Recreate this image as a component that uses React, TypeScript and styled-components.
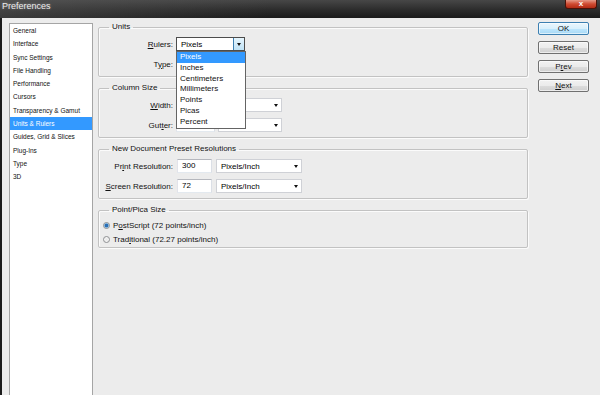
import React from "react"
import styled, { createGlobalStyle } from "styled-components"

const GlobalStyle = createGlobalStyle`
  html, body {
    margin: 0;
    padding: 0;
    background: #ececec;
  }
  body {
    font-family: "Liberation Sans", Arial, sans-serif;
  }
`

const Window = styled.div`
  width: 600px;
  height: 395px;
  overflow: hidden;
  display: flex;
  flex-direction: column;
  background: #ececec;
  font-family: "Liberation Sans", Arial, sans-serif;
  font-size: 8px;
  color: #000;
`

const TitleBar = styled.div`
  height: 18px;
  flex: none;
  display: flex;
  align-items: flex-start;
  justify-content: space-between;
  padding: 0 3px 0 2px;
  background: linear-gradient(to right, rgba(90, 90, 90, 0.5), rgba(0, 0, 0, 0) 45%),
    linear-gradient(to bottom, #474747 0%, #2c2c2c 55%, #1b1b1b 100%);
`

const Title = styled.div`
  color: #ececec;
  font-size: 9px;
  line-height: 12px;
  text-shadow: 0 0 3px rgba(255, 255, 255, 0.35);
`

const CloseButton = styled.div`
  width: 30px;
  height: 8px;
  border: 1px solid #4a1208;
  border-top: none;
  border-radius: 0 0 3px 3px;
  background: linear-gradient(#e59a88, #cf4a31 50%, #b22b14);
  color: #fff;
  font-size: 8px;
  font-weight: bold;
  line-height: 7px;
  text-align: center;
`

const Body = styled.div`
  flex: 1;
  min-height: 0;
  display: flex;
  align-items: flex-start;
  padding: 5px 0 0 7px;
  border-left: 2px solid #1c1c1c;
`

const Sidebar = styled.ul`
  list-style: none;
  margin: 0 0 -2px;
  padding: 0;
  width: 82px;
  flex: none;
  align-self: stretch;
  background: #fff;
  border: 1px solid #a5a5a5;
`

const SidebarItem = styled.li<{ $active?: boolean }>`
  height: 13.3px;
  line-height: 13.3px;
  padding-left: 3px;
  font-size: 6.5px;
  white-space: nowrap;
  background: ${(p) => (p.$active ? "#3399ff" : "transparent")};
  color: ${(p) => (p.$active ? "#fff" : "#111")};
`

const Main = styled.div`
  width: 430px;
  flex: none;
  margin: -1px 0 0 5px;
  display: flex;
  flex-direction: column;
  gap: 6px;
`

const Group = styled.fieldset<{ $gap?: number; $pad?: string }>`
  margin: 0;
  padding: ${(p) => p.$pad ?? "5px 0 5px"};
  min-width: 0;
  border: 1px solid #c2c2c2;
  border-radius: 2px;
  box-shadow: inset 1px 1px 0 #fbfbfb, 1px 1px 0 #fbfbfb;
  display: flex;
  flex-direction: column;
  gap: ${(p) => p.$gap ?? 6}px;
`

const Legend = styled.legend`
  margin-left: 10px;
  padding: 0 3px;
  font-size: 8px;
  line-height: 10px;
  color: #111;
`

const Row = styled.div<{ $gap?: number }>`
  display: flex;
  align-items: center;
  height: 14px;
  gap: ${(p) => p.$gap ?? 3}px;
`

const Label = styled.label`
  width: 74px;
  flex: none;
  text-align: right;
  white-space: nowrap;
  color: #111;
`

const U = styled.span`
  text-decoration: underline;
`

const TextBox = styled.div<{ $w: number }>`
  width: ${(p) => p.$w}px;
  height: 14px;
  box-sizing: border-box;
  flex: none;
  padding-left: 4px;
  line-height: 12px;
  background: #fff;
  border: 1px solid;
  border-color: #b5b7bd #dbdfe6 #e3e9ef #e2e3ea;
`

const Select = styled.div<{ $w: number; $focused?: boolean }>`
  position: relative;
  width: ${(p) => p.$w}px;
  height: 14px;
  box-sizing: border-box;
  flex: none;
  display: flex;
  align-items: center;
  justify-content: space-between;
  padding-left: 4px;
  background: #fff;
  border: 1px solid ${(p) => (p.$focused ? "#4c4c4c" : "#cfd1d6")};
`

const Arrow = styled.span`
  width: 0;
  height: 0;
  margin-right: 3px;
  border-left: 2.5px solid transparent;
  border-right: 2.5px solid transparent;
  border-top: 3px solid #111;
`

const ArrowButton = styled.span`
  width: 11px;
  height: 12px;
  box-sizing: border-box;
  display: flex;
  align-items: center;
  justify-content: center;
  background: linear-gradient(#e6f5fd, #bfe2f6);
  border-left: 1px solid #3c7fb1;
`

const DropList = styled.ul`
  position: absolute;
  top: 13px;
  left: -1px;
  width: 70px;
  box-sizing: border-box;
  margin: 0;
  padding: 0;
  list-style: none;
  background: #fff;
  border: 1px solid #646464;
  z-index: 10;
`

const DropItem = styled.li<{ $active?: boolean }>`
  height: 10.8px;
  line-height: 10.8px;
  padding-left: 3px;
  background: ${(p) => (p.$active ? "#3399ff" : "transparent")};
  color: ${(p) => (p.$active ? "#fff" : "#111")};
`

const RadioRow = styled.label`
  display: flex;
  align-items: center;
  gap: 3px;
  height: 12px;
  padding-left: 4px;
  color: #111;
`

const RadioDot = styled.span<{ $checked?: boolean }>`
  width: 7px;
  height: 7px;
  box-sizing: border-box;
  border-radius: 50%;
  border: 1px solid #8d8f92;
  background: ${(p) =>
    p.$checked
      ? "radial-gradient(circle, #2a6fb5 0 1.6px, #8fc3ea 2.1px, #f1f1f1 3px)"
      : "radial-gradient(circle, #e8e8e8, #fafafa)"};
`

const ButtonColumn = styled.div`
  width: 51px;
  flex: none;
  margin: -1px 0 0 10px;
  display: flex;
  flex-direction: column;
  gap: 6px;
`

const Button = styled.button<{ $primary?: boolean }>`
  height: 13px;
  padding: 0;
  font-family: inherit;
  font-size: 8px;
  line-height: 11px;
  color: #111;
  border-radius: 2px;
  border: 1px solid ${(p) => (p.$primary ? "#3c7fb1" : "#707070")};
  background: ${(p) =>
    p.$primary
      ? "linear-gradient(#eaf6fd 0%, #d9f0fc 50%, #bee6fd 51%, #a7d9f5 100%)"
      : "linear-gradient(#f2f2f2 0%, #ebebeb 50%, #dddddd 51%, #cfcfcf 100%)"};
  box-shadow: inset 0 0 0 1px rgba(255, 255, 255, 0.6);
`

const navItems = [
  "General",
  "Interface",
  "Sync Settings",
  "File Handling",
  "Performance",
  "Cursors",
  "Transparency & Gamut",
  "Units & Rulers",
  "Guides, Grid & Slices",
  "Plug-Ins",
  "Type",
  "3D",
]

const units = ["Pixels", "Inches", "Centimeters", "Millimeters", "Points", "Picas", "Percent"]

const App: React.FC = () => {
  return (
    <Window>
      <GlobalStyle />
      <TitleBar>
        <Title>Preferences</Title>
        <CloseButton>x</CloseButton>
      </TitleBar>
      <Body>
        <Sidebar>
          {navItems.map((item) => (
            <SidebarItem key={item} $active={item === "Units & Rulers"}>
              {item}
            </SidebarItem>
          ))}
        </Sidebar>

        <Main>
          <Group>
            <Legend>Units</Legend>
            <Row>
              <Label>
                <U>R</U>ulers:
              </Label>
              <Select $w={69} $focused>
                Pixels
                <ArrowButton>
                  <Arrow style={{ marginRight: 0 }} />
                </ArrowButton>
                <DropList>
                  {units.map((u) => (
                    <DropItem key={u} $active={u === "Pixels"}>
                      {u}
                    </DropItem>
                  ))}
                </DropList>
              </Select>
            </Row>
            <Row>
              <Label>
                T<U>y</U>pe:
              </Label>
              <Select $w={69}>
                Points
                <Arrow />
              </Select>
            </Row>
          </Group>

          <Group>
            <Legend>Column Size</Legend>
            <Row>
              <Label>
                <U>W</U>idth:
              </Label>
              <TextBox $w={39}>180</TextBox>
              <Select $w={64}>
                Points
                <Arrow />
              </Select>
            </Row>
            <Row>
              <Label>
                Gut<U>t</U>er:
              </Label>
              <TextBox $w={39}>12</TextBox>
              <Select $w={64}>
                Points
                <Arrow />
              </Select>
            </Row>
          </Group>

          <Group>
            <Legend>New Document Preset Resolutions</Legend>
            <Row $gap={4}>
              <Label>
                Pr<U>i</U>nt Resolution:
              </Label>
              <TextBox $w={35}>300</TextBox>
              <Select $w={86}>
                Pixels/Inch
                <Arrow />
              </Select>
            </Row>
            <Row $gap={4}>
              <Label>
                <U>S</U>creen Resolution:
              </Label>
              <TextBox $w={35}>72</TextBox>
              <Select $w={86}>
                Pixels/Inch
                <Arrow />
              </Select>
            </Row>
          </Group>

          <Group $gap={2} $pad="4px 0 2px">
            <Legend>Point/Pica Size</Legend>
            <RadioRow>
              <RadioDot $checked />
              <span>
                P<U>o</U>stScript (72 points/inch)
              </span>
            </RadioRow>
            <RadioRow>
              <RadioDot />
              <span>
                Trad<U>i</U>tional (72.27 points/inch)
              </span>
            </RadioRow>
          </Group>
        </Main>

        <ButtonColumn>
          <Button $primary>OK</Button>
          <Button>Reset</Button>
          <Button>
            P<U>r</U>ev
          </Button>
          <Button>
            <U>N</U>ext
          </Button>
        </ButtonColumn>
      </Body>
    </Window>
  )
}

export default App
